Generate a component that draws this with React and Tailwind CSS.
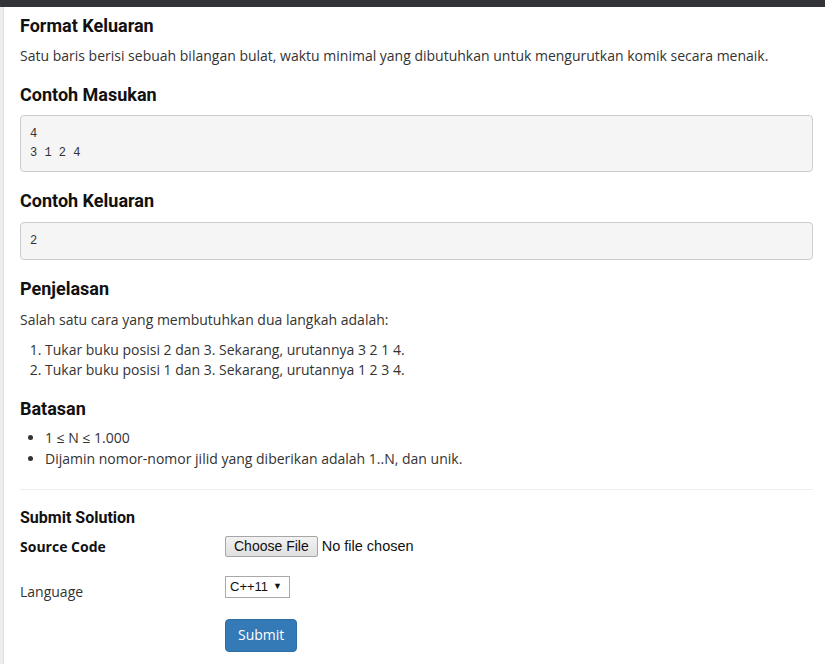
import React from 'react';

const Heading = ({ children, className = '' }) => (
    <h3 className={`text-[18px] leading-[20px] font-bold text-[#111] font-['Roboto',sans-serif] ${className}`}>
        {children}
    </h3>
);

const Pre = ({ lines, className = '' }) => (
    <pre className={`bg-[#f5f5f5] border border-[#ccc] rounded-[4px] px-[9px] py-[8.5px] text-[12px] leading-[19px] text-[#333] font-['Liberation_Mono',monospace] ${className}`}>
        {lines.join('\n')}
    </pre>
);

const App = () => {
    return (
        <div className="min-h-[664px] bg-white font-['Open_Sans',sans-serif] text-[14px] text-[#333]">
            <div className="h-[7px] bg-[#323437]" />
            <div className="flex">
                <div className="w-[4px] bg-[#eee] border-r border-[#ddd] self-stretch" />
                <div className="flex-1 pl-[16px] pr-[12px] pt-[9px] pb-[20px]">
                    <Heading>Format Keluaran</Heading>
                    <p className="mt-[10px] leading-[20px]">
                        Satu baris berisi sebuah bilangan bulat, waktu minimal yang dibutuhkan untuk mengurutkan komik secara menaik.
                    </p>

                    <Heading className="mt-[19px]">Contoh Masukan</Heading>
                    <Pre className="mt-[10px]" lines={['4', '3 1 2 4']} />

                    <Heading className="mt-[19px]">Contoh Keluaran</Heading>
                    <Pre className="mt-[11px]" lines={['2']} />

                    <Heading className="mt-[19px]">Penjelasan</Heading>
                    <p className="mt-[11px] leading-[20px]">Salah satu cara yang membutuhkan dua langkah adalah:</p>
                    <ol className="mt-[10px] list-decimal pl-[25px] leading-[20px]">
                        <li>Tukar buku posisi 2 dan 3. Sekarang, urutannya 3 2 1 4.</li>
                        <li>Tukar buku posisi 1 dan 3. Sekarang, urutannya 1 2 3 4.</li>
                    </ol>

                    <Heading className="mt-[19px]">Batasan</Heading>
                    <ul className="mt-[9px] list-disc pl-[25px] leading-[20.5px]">
                        <li>1 ≤ N ≤ 1.000</li>
                        <li>Dijamin nomor-nomor jilid yang diberikan adalah 1..N, dan unik.</li>
                    </ul>

                    <hr className="mt-[20px] border-t border-[#eee]" />

                    <div className="mt-[19px] font-['Roboto',sans-serif] font-bold text-[16px] leading-[18px] text-[#111]">
                        Submit Solution
                    </div>

                    <div className="mt-[9px] flex items-center">
                        <div className="w-[205px] font-bold leading-[20px] text-[#111]">Source Code</div>
                        <div className="flex items-center">
                            <button className="h-[21px] px-[8px] bg-gradient-to-b from-[#f2f2f2] to-[#e0e0e0] border border-[#a6a6a6] rounded-[2px] text-[14px] leading-[19px] text-[#111] font-['Liberation_Sans',sans-serif]">
                                Choose File
                            </button>
                            <span className="ml-[4px] text-[14.5px] text-[#111] font-['Liberation_Sans',sans-serif]">No file chosen</span>
                        </div>
                    </div>

                    <div className="mt-[18px] flex items-start">
                        <div className="w-[205px] pt-[6px] leading-[20px]">Language</div>
                        <div className="inline-flex items-center h-[22px] w-[65px] border border-[#a9a9a9] bg-white pl-[4px] text-[13px] text-[#111] font-['Liberation_Sans',sans-serif]">
                            <span>C++11</span>
                            <span className="ml-[5px] text-[9px]">▼</span>
                        </div>
                    </div>

                    <div className="mt-[17px] pl-[205px]">
                        <button className="h-[33px] px-[12px] bg-[#337ab7] border border-[#2e6da4] rounded-[4px] text-white text-[14px] leading-[20px]">
                            Submit
                        </button>
                    </div>
                </div>
            </div>
        </div>
    );
};

export default App;
